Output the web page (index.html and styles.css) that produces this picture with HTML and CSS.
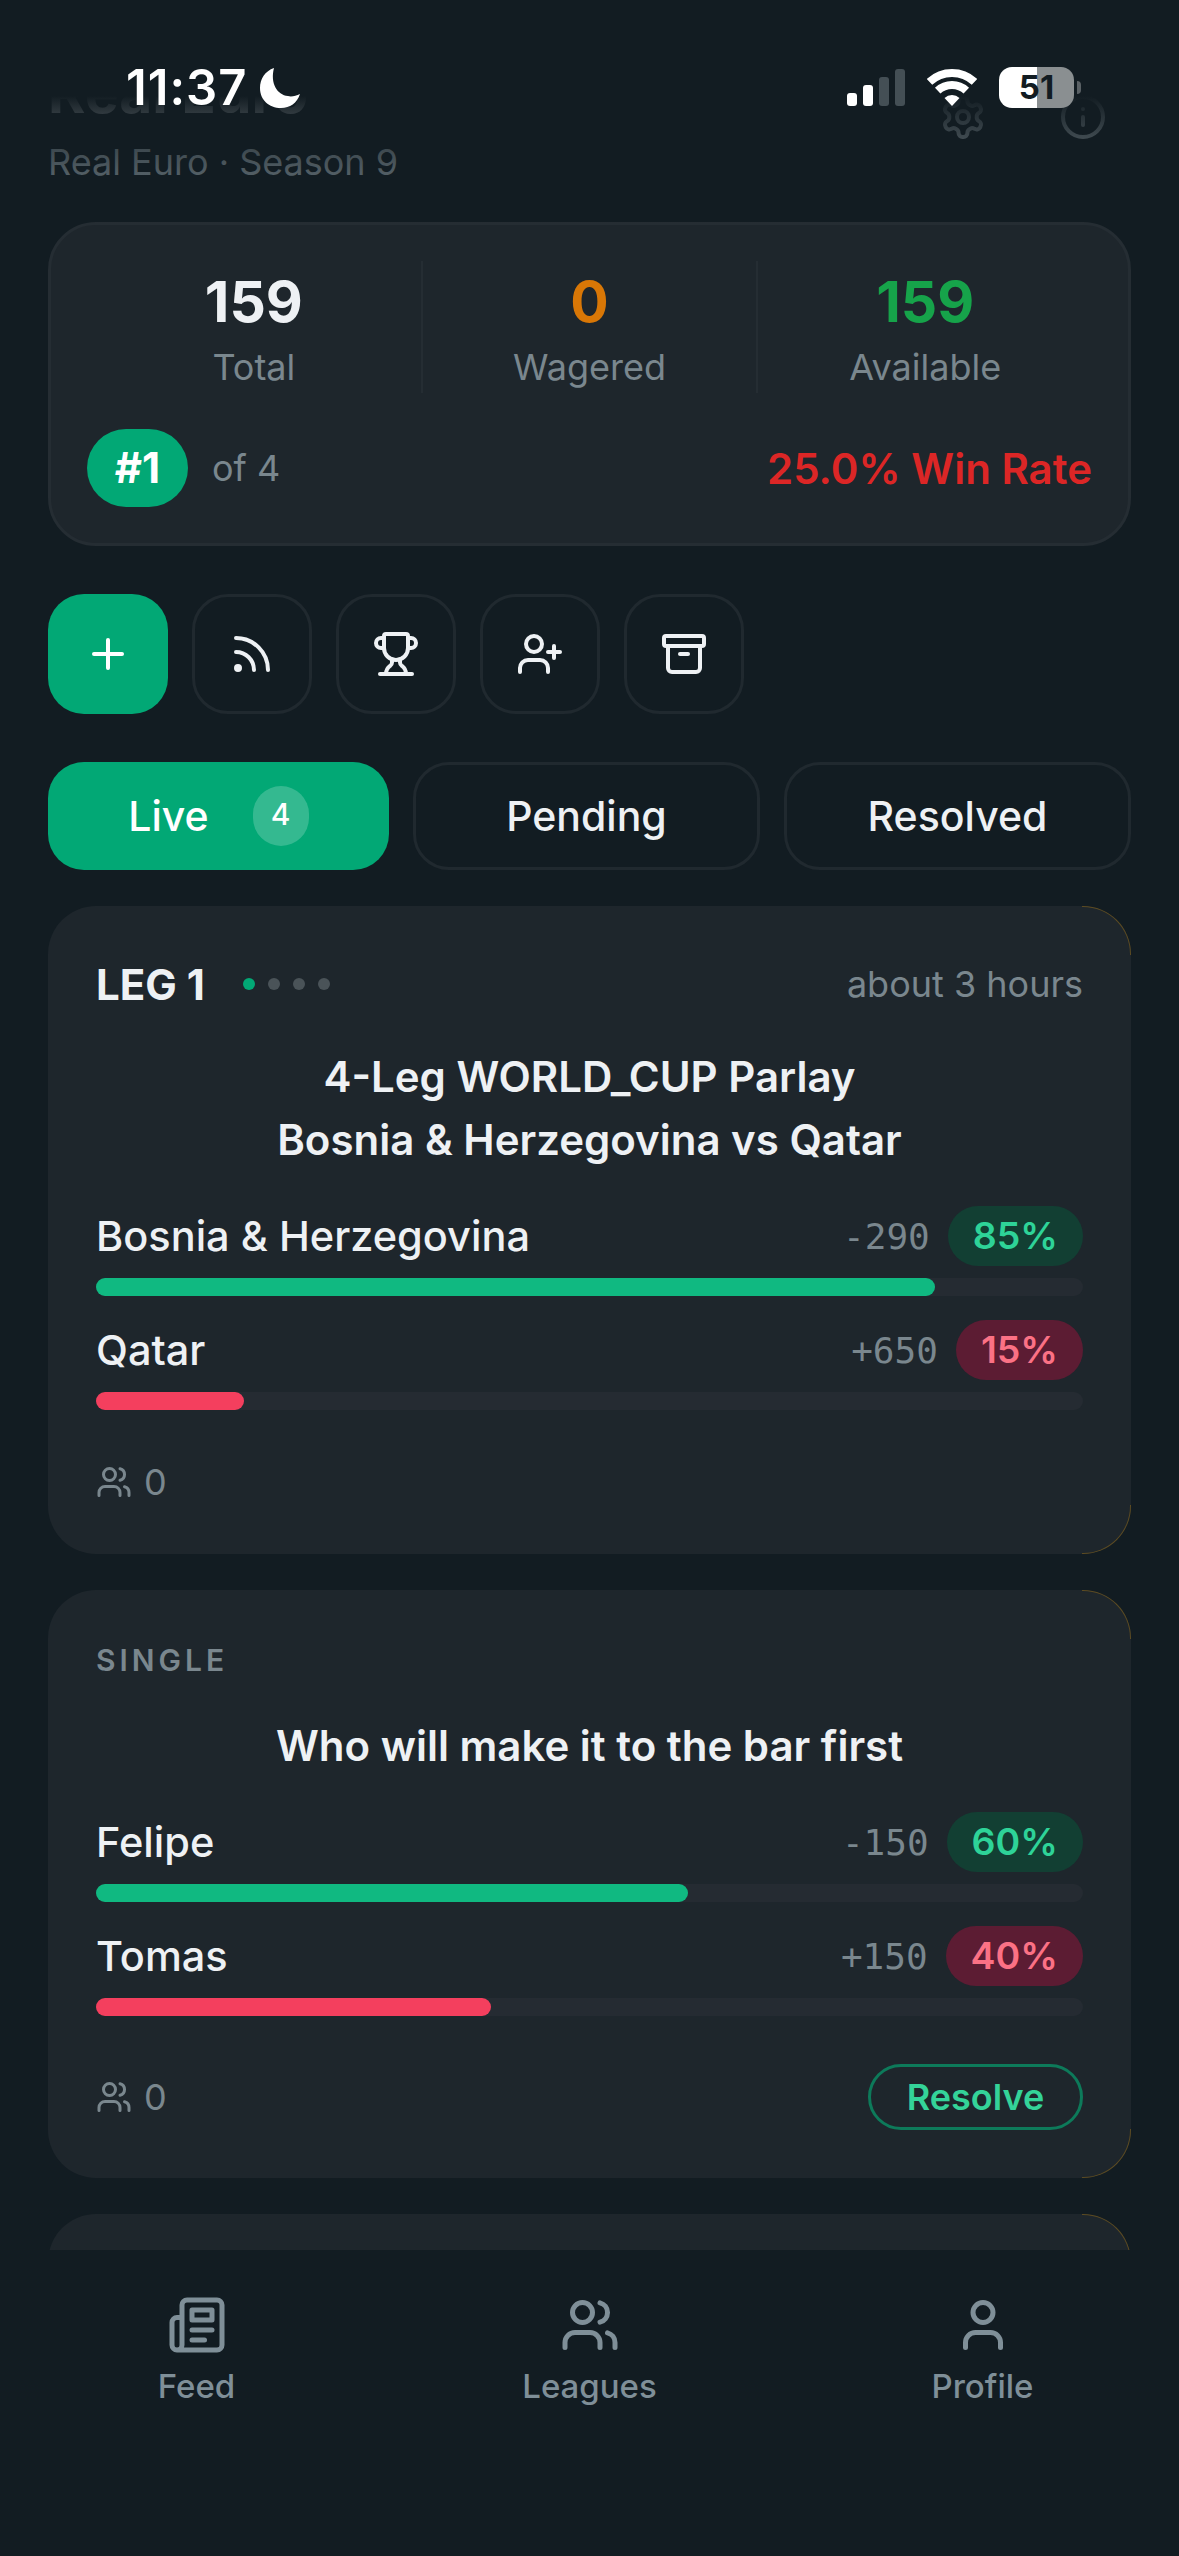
FILE: index.html
```html
<!DOCTYPE html>
<html lang="en">
<head>
    <meta charset="UTF-8">
    <meta name="viewport" content="width=device-width, initial-scale=1.0">
    <title>Real Euro</title>
    <link rel="stylesheet" href="styles.css">
</head>
<body>
<div class="screen">
    <!-- Status bar sits over the scrolled page -->
    <div class="top-fade"></div>
    <div class="status-bar">
        <div class="status-left">
            <span class="clock">11:37</span>
            <svg class="moon" viewBox="0 0 40 40"><path d="M14 0C5 3 0 11 0 20C0 32 9 40 21 40C30 40 37 35 40 26C36 28 31 29 28 28C17 27 10 15 14 0Z" fill="#fff"/></svg>
        </div>
        <div class="status-right">
            <div class="signal">
                <span class="signal-bar bar-1"></span>
                <span class="signal-bar bar-2"></span>
                <span class="signal-bar bar-3"></span>
                <span class="signal-bar bar-4"></span>
            </div>
            <svg class="wifi" viewBox="0 0 50 37">
                <path d="M2.5 12.9A33 33 0 0 1 47.5 12.9"/>
                <path d="M10.7 21.6A21 21 0 0 1 39.3 21.6"/>
                <path d="M25 37L17.5 29A11 11 0 0 1 32.5 29Z" fill="#fff" stroke="none"/>
            </svg>
            <div class="battery"><span>51</span></div>
        </div>
    </div>

    <header class="page-header">
        <div>
            <h1>Real Euro</h1>
            <p class="subtitle">Real Euro · Season 9</p>
        </div>
        <div class="header-actions">
            <button class="header-btn">
                <svg class="icon-48" viewBox="0 0 24 24"><path d="M12.22 2h-.44a2 2 0 0 0-2 2v.18a2 2 0 0 1-1 1.73l-.43.25a2 2 0 0 1-2 0l-.15-.08a2 2 0 0 0-2.73.73l-.22.38a2 2 0 0 0 .73 2.73l.15.1a2 2 0 0 1 1 1.72v.51a2 2 0 0 1-1 1.74l-.15.09a2 2 0 0 0-.73 2.73l.22.38a2 2 0 0 0 2.73.73l.15-.08a2 2 0 0 1 2 0l.43.25a2 2 0 0 1 1 1.73V20a2 2 0 0 0 2 2h.44a2 2 0 0 0 2-2v-.18a2 2 0 0 1 1-1.73l.43-.25a2 2 0 0 1 2 0l.15.08a2 2 0 0 0 2.73-.73l.22-.39a2 2 0 0 0-.73-2.73l-.15-.08a2 2 0 0 1-1-1.74v-.5a2 2 0 0 1 1-1.74l.15-.09a2 2 0 0 0 .73-2.73l-.22-.38a2 2 0 0 0-2.73-.73l-.15.08a2 2 0 0 1-2 0l-.43-.25a2 2 0 0 1-1-1.73V4a2 2 0 0 0-2-2z"/><circle cx="12" cy="12" r="3"/></svg>
            </button>
            <button class="header-btn">
                <svg class="icon-48" viewBox="0 0 24 24"><circle cx="12" cy="12" r="10"/><path d="M12 16v-4"/><path d="M12 8h.01"/></svg>
            </button>
        </div>
    </header>

    <!-- Balance summary -->
    <section class="stats-card">
        <div class="stats-row">
            <div class="stat">
                <div class="stat-value">159</div>
                <div class="stat-label">Total</div>
            </div>
            <div class="stat">
                <div class="stat-value text-orange">0</div>
                <div class="stat-label">Wagered</div>
            </div>
            <div class="stat">
                <div class="stat-value text-green">159</div>
                <div class="stat-label">Available</div>
            </div>
        </div>
        <div class="rank-row">
            <span class="rank-badge">#1</span>
            <span class="rank-of">of 4</span>
            <span class="win-rate">25.0% Win Rate</span>
        </div>
    </section>

    <div class="actions">
        <button class="action-btn action-primary">
            <svg class="icon-48" viewBox="0 0 24 24"><path d="M5 12h14"/><path d="M12 5v14"/></svg>
        </button>
        <button class="action-btn">
            <svg class="icon-48" viewBox="0 0 24 24"><path d="M4 11a9 9 0 0 1 9 9"/><path d="M4 4a16 16 0 0 1 16 16"/><circle cx="5" cy="19" r="1"/></svg>
        </button>
        <button class="action-btn">
            <svg class="icon-48" viewBox="0 0 24 24"><path d="M10 14.66v1.626a2 2 0 0 1-.976 1.696A5 5 0 0 0 7 21.978"/><path d="M14 14.66v1.626a2 2 0 0 0 .976 1.696A5 5 0 0 1 17 21.978"/><path d="M18 9h1.5a1 1 0 0 0 0-5H18"/><path d="M4 22h16"/><path d="M6 9a6 6 0 0 0 12 0V3a1 1 0 0 0-1-1H7a1 1 0 0 0-1 1z"/><path d="M6 9H4.5a1 1 0 0 1 0-5H6"/></svg>
        </button>
        <button class="action-btn">
            <svg class="icon-48" viewBox="0 0 24 24"><path d="M16 21v-2a4 4 0 0 0-4-4H6a4 4 0 0 0-4 4v2"/><circle cx="9" cy="7" r="4"/><path d="M19 8v6"/><path d="M22 11h-6"/></svg>
        </button>
        <button class="action-btn">
            <svg class="icon-48" viewBox="0 0 24 24"><rect x="2" y="3" width="20" height="5" rx="1"/><path d="M4 8v11a2 2 0 0 0 2 2h12a2 2 0 0 0 2-2V8"/><path d="M10 12h4"/></svg>
        </button>
    </div>

    <div class="tabs">
        <button class="tab tab-live">Live <span class="tab-count">4</span></button>
        <button class="tab">Pending</button>
        <button class="tab">Resolved</button>
    </div>

    <!-- Bet cards -->
    <article class="bet-card">
        <div class="bet-head">
            <div class="leg">
                <span class="leg-name">LEG 1</span>
                <span class="leg-dots">
                    <span class="dot dot-on"></span>
                    <span class="dot"></span>
                    <span class="dot"></span>
                    <span class="dot"></span>
                </span>
            </div>
            <span class="bet-time">about 3 hours</span>
        </div>
        <h2 class="bet-title">4-Leg WORLD_CUP Parlay<br>Bosnia &amp; Herzegovina vs Qatar</h2>
        <div class="options">
            <div class="option">
                <div class="option-row">
                    <span class="option-name">Bosnia &amp; Herzegovina</span>
                    <span class="odds">-290</span>
                    <span class="pct pct-up">85%</span>
                </div>
                <div class="track"><div class="fill fill-up" style="width: 85%"></div></div>
            </div>
            <div class="option">
                <div class="option-row">
                    <span class="option-name">Qatar</span>
                    <span class="odds">+650</span>
                    <span class="pct pct-down">15%</span>
                </div>
                <div class="track"><div class="fill fill-down" style="width: 15%"></div></div>
            </div>
        </div>
        <div class="bet-foot">
            <span class="people">
                <svg class="icon-36" viewBox="0 0 24 24"><path d="M16 21v-2a4 4 0 0 0-4-4H6a4 4 0 0 0-4 4v2"/><circle cx="9" cy="7" r="4"/><path d="M22 21v-2a4 4 0 0 0-3-3.87"/><path d="M16 3.13a4 4 0 0 1 0 7.75"/></svg>
                0
            </span>
        </div>
    </article>

    <article class="bet-card">
        <div class="bet-type">SINGLE</div>
        <h2 class="bet-title">Who will make it to the bar first</h2>
        <div class="options">
            <div class="option">
                <div class="option-row">
                    <span class="option-name">Felipe</span>
                    <span class="odds">-150</span>
                    <span class="pct pct-up">60%</span>
                </div>
                <div class="track"><div class="fill fill-up" style="width: 60%"></div></div>
            </div>
            <div class="option">
                <div class="option-row">
                    <span class="option-name">Tomas</span>
                    <span class="odds">+150</span>
                    <span class="pct pct-down">40%</span>
                </div>
                <div class="track"><div class="fill fill-down" style="width: 40%"></div></div>
            </div>
        </div>
        <div class="bet-foot">
            <span class="people">
                <svg class="icon-36" viewBox="0 0 24 24"><path d="M16 21v-2a4 4 0 0 0-4-4H6a4 4 0 0 0-4 4v2"/><circle cx="9" cy="7" r="4"/><path d="M22 21v-2a4 4 0 0 0-3-3.87"/><path d="M16 3.13a4 4 0 0 1 0 7.75"/></svg>
                0
            </span>
            <button class="resolve-btn">Resolve</button>
        </div>
    </article>

    <article class="bet-card bet-card-next"></article>

    <!-- Bottom navigation -->
    <nav class="bottom-nav">
        <a class="nav-item">
            <svg class="icon-60" viewBox="0 0 24 24"><path d="M4 22h16a2 2 0 0 0 2-2V4a2 2 0 0 0-2-2H8a2 2 0 0 0-2 2v16a2 2 0 0 1-2 2Zm0 0a2 2 0 0 1-2-2v-9c0-1.1.9-2 2-2h2"/><path d="M18 14h-8"/><path d="M15 18h-5"/><path d="M10 6h8v4h-8V6Z"/></svg>
            <span>Feed</span>
        </a>
        <a class="nav-item">
            <svg class="icon-60" viewBox="0 0 24 24"><path d="M16 21v-2a4 4 0 0 0-4-4H6a4 4 0 0 0-4 4v2"/><circle cx="9" cy="7" r="4"/><path d="M22 21v-2a4 4 0 0 0-3-3.87"/><path d="M16 3.13a4 4 0 0 1 0 7.75"/></svg>
            <span>Leagues</span>
        </a>
        <a class="nav-item">
            <svg class="icon-60" viewBox="0 0 24 24"><path d="M19 21v-2a4 4 0 0 0-4-4H9a4 4 0 0 0-4 4v2"/><circle cx="12" cy="7" r="4"/></svg>
            <span>Profile</span>
        </a>
    </nav>
</div>
</body>
</html>
```

FILE: styles.css
```css
* {
    box-sizing: border-box;
}

body {
    margin: 0;
    padding: 0;
    background: #121c22;
    color: #eef1f4;
    font-family: Inter, "Noto Sans", sans-serif;
}

button {
    font-family: inherit;
    color: inherit;
    background: none;
    border: none;
    padding: 0;
}

svg {
    display: block;
    fill: none;
    stroke: currentColor;
    stroke-width: 2;
    stroke-linecap: round;
    stroke-linejoin: round;
}

.icon-36 { width: 36px; height: 36px; }
.icon-48 { width: 48px; height: 48px; }
.icon-60 { width: 60px; height: 60px; }

.screen {
    position: relative;
    width: 1179px;
    height: 2556px;
    padding: 0 48px;
    overflow: hidden;
}

/* Status bar */
.top-fade {
    position: absolute;
    top: 0;
    left: 0;
    right: 0;
    height: 224px;
    z-index: 1;
    background: linear-gradient(to bottom, #121c22 96px, rgba(18, 28, 34, 0) 224px);
}

.status-bar {
    position: absolute;
    top: 67px;
    left: 126px;
    right: 105px;
    z-index: 2;
    display: flex;
    justify-content: space-between;
    align-items: center;
    height: 41px;
}

.status-left {
    display: flex;
    align-items: center;
    gap: 13px;
}

.clock {
    font-size: 49px;
    font-weight: 600;
    line-height: 41px;
    color: #fff;
    letter-spacing: 1px;
}

.moon {
    width: 40px;
    height: 40px;
    stroke: none;
}

.status-right {
    display: flex;
    align-items: center;
    gap: 22px;
}

.signal {
    display: flex;
    align-items: flex-end;
    gap: 6px;
    height: 37px;
}

.signal-bar {
    width: 10px;
    border-radius: 3px;
    background: #fff;
}

.bar-1 { height: 13px; }
.bar-2 { height: 21px; }
.bar-3 { height: 29px; background: #444f55; }
.bar-4 { height: 37px; background: #444f55; }

.wifi {
    width: 50px;
    height: 37px;
    stroke: #fff;
    stroke-width: 8;
    stroke-linecap: butt;
}

.battery {
    position: relative;
    width: 75px;
    height: 41px;
    border-radius: 13px;
    background: linear-gradient(to right, #fff 51%, #8a8f91 51%);
    color: #121c22;
    font-size: 33px;
    font-weight: 700;
    line-height: 41px;
    text-align: center;
}

.battery::after {
    content: "";
    position: absolute;
    top: 14px;
    right: -7px;
    width: 4px;
    height: 13px;
    border-radius: 0 4px 4px 0;
    background: #5a6165;
}

/* Header */
.page-header {
    display: flex;
    justify-content: space-between;
    padding-top: 52px;
    margin-bottom: 33px;
}

h1 {
    margin: 0;
    font-size: 57px;
    font-weight: 700;
    line-height: 81px;
}

.subtitle {
    margin: 2px 0 0;
    font-size: 36px;
    line-height: 54px;
    color: #7a878e;
}

.header-actions {
    display: flex;
    gap: 24px;
    margin-top: 17px;
}

.header-btn {
    width: 96px;
    height: 96px;
    display: flex;
    align-items: center;
    justify-content: center;
    color: #9aa6ac;
}

/* Stats */
.stats-card {
    padding: 36px;
    margin-bottom: 48px;
    background: #1e262c;
    border: 3px solid #252d33;
    border-radius: 48px;
}

.stats-row {
    display: flex;
}

.stat {
    flex: 1;
    text-align: center;
    border-right: 2px solid #252d33;
}

.stat:last-child {
    border-right: none;
}

.stat-value {
    font-size: 57px;
    font-weight: 700;
    line-height: 81px;
}

.stat-label {
    font-size: 36px;
    line-height: 51px;
    color: #7a878e;
}

.text-orange { color: #d97706; }
.text-green { color: #16a34a; }

.rank-row {
    display: flex;
    align-items: center;
    margin-top: 36px;
}

.rank-badge {
    width: 101px;
    height: 78px;
    border-radius: 39px;
    background: #02a875;
    color: #fff;
    font-size: 42px;
    font-weight: 700;
    line-height: 78px;
    text-align: center;
}

.rank-of {
    margin-left: 24px;
    font-size: 36px;
    color: #7a878e;
}

.win-rate {
    margin-left: auto;
    font-size: 42px;
    font-weight: 600;
    color: #dc2626;
}

/* Action buttons */
.actions {
    display: flex;
    gap: 24px;
    margin-bottom: 48px;
}

.action-btn {
    width: 120px;
    height: 120px;
    display: flex;
    align-items: center;
    justify-content: center;
    border: 3px solid #20292f;
    border-radius: 36px;
}

.action-primary {
    border: none;
    background: #02a875;
    color: #fff;
}

/* Tabs */
.tabs {
    display: flex;
    gap: 24px;
    margin-bottom: 36px;
}

.tab {
    flex: 1;
    height: 108px;
    display: flex;
    align-items: center;
    justify-content: center;
    border: 3px solid #20292f;
    border-radius: 36px;
    font-size: 41px;
    font-weight: 500;
}

.tab-live {
    flex: 0 0 341px;
    gap: 44px;
    border: none;
    background: #02a875;
    color: #fff;
}

.tab-count {
    width: 56px;
    height: 60px;
    border-radius: 30px;
    background: rgba(255, 255, 255, 0.2);
    font-size: 30px;
    line-height: 56px;
    text-align: center;
}

/* Bet cards */
.bet-card {
    position: relative;
    padding: 48px;
    margin-bottom: 36px;
    background: #1e262c;
    border-radius: 48px;
}

/* Thin warm edge on the right-hand corners */
.bet-card::before,
.bet-card::after {
    content: "";
    position: absolute;
    right: 0;
    width: 48px;
    height: 48px;
    border-right: 1px solid #5c4b22;
}

.bet-card::before {
    top: 0;
    border-top: 1px solid #5c4b22;
    border-top-right-radius: 48px;
}

.bet-card::after {
    bottom: 0;
    border-bottom: 1px solid #5c4b22;
    border-bottom-right-radius: 48px;
}

.bet-card-next {
    height: 300px;
}

.bet-head {
    display: flex;
    justify-content: space-between;
    align-items: center;
    height: 60px;
}

.leg {
    display: flex;
    align-items: center;
    gap: 38px;
}

.leg-name {
    font-size: 42px;
    font-weight: 700;
}

.leg-dots {
    display: flex;
    gap: 13px;
}

.dot {
    width: 12px;
    height: 12px;
    border-radius: 50%;
    background: #4a5358;
}

.dot-on {
    background: #02a875;
}

.bet-time {
    font-size: 36px;
    color: #7a878e;
}

.bet-type {
    font-size: 30px;
    font-weight: 600;
    line-height: 45px;
    letter-spacing: 4px;
    color: #7a878e;
}

.bet-title {
    margin: 31px 0 35px;
    font-size: 42px;
    font-weight: 600;
    line-height: 63px;
    text-align: center;
}

.options {
    display: flex;
    flex-direction: column;
    gap: 24px;
}

.option-row {
    display: flex;
    align-items: center;
    height: 60px;
    margin-bottom: 12px;
}

.option-name {
    flex: 1;
    font-size: 41.5px;
    font-weight: 500;
}

.odds {
    margin-right: 18px;
    font-family: "DejaVu Sans Mono", monospace;
    font-size: 36px;
    color: #7a878e;
}

.pct {
    height: 60px;
    padding: 0 25px;
    border-radius: 30px;
    font-size: 37.5px;
    font-weight: 600;
    line-height: 60px;
}

.pct-up {
    background: #123f33;
    color: #2ed398;
}

.pct-down {
    background: #5c1c33;
    color: #fb7185;
}

.track {
    height: 18px;
    border-radius: 9px;
    background: #252b32;
}

.fill {
    height: 18px;
    border-radius: 9px;
}

.fill-up { background: #10b981; }
.fill-down { background: #f43f5e; }

.bet-foot {
    display: flex;
    justify-content: space-between;
    align-items: center;
    min-height: 48px;
    margin-top: 48px;
}

.people {
    display: flex;
    align-items: center;
    gap: 12px;
    font-size: 36px;
    color: #7a878e;
}

.resolve-btn {
    width: 215px;
    height: 66px;
    border: 3px solid #0d7a5a;
    border-radius: 33px;
    font-size: 36px;
    font-weight: 600;
    color: #34d399;
}

/* Bottom nav */
.bottom-nav {
    position: absolute;
    left: 0;
    right: 0;
    bottom: 0;
    height: 306px;
    padding-top: 45px;
    display: flex;
    background: #121c22;
}

.nav-item {
    flex: 1;
    display: flex;
    flex-direction: column;
    align-items: center;
    gap: 4px;
    font-size: 33px;
    font-weight: 500;
    line-height: 54px;
    color: #7f8f98;
}
```
